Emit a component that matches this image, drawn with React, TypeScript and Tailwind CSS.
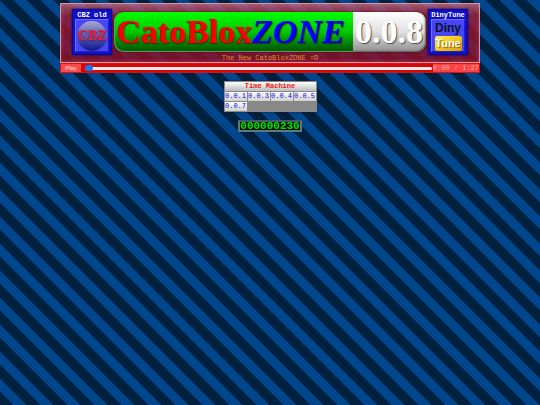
import React, { useState } from 'react';

const VERSIONS = [
  ['0.0.1', '0.0.3', '0.0.4', '0.0.5'],
  ['0.0.7'],
];

interface SiteLinkProps {
  href: string;
  label: string;
  children: React.ReactNode;
}

const SiteLink = ({ href, label, children }: SiteLinkProps) => (
  <a
    href={href}
    className="flex h-[46px] w-10 shrink-0 flex-col items-center border border-[#0808a0] bg-[#1010c4] px-[2px] pt-px pb-[2px] shadow-[0_0_2px_#000060]"
  >
    <span className="text-[7px] leading-[8px] font-bold whitespace-nowrap text-white">{label}</span>
    <span className="flex w-full flex-1 flex-col items-center justify-center border border-t-[#7070ff] border-r-[#2020c0] border-b-[#2020c0] border-l-[#7070ff] bg-[#4646f4]">
      {children}
    </span>
  </a>
);

const Banner = () => (
  <h1 className="flex h-10 min-w-0 flex-1 overflow-hidden rounded-[9px] font-['Liberation_Serif',serif] text-[34px] leading-[40px] font-bold whitespace-nowrap shadow-[0_0_2px_#400010]">
    <span className="flex flex-1 rounded-l-[9px] bg-linear-to-b from-[#00ff00] via-[#00c800] to-[#005000] pl-[2px] text-[#f80000] shadow-[inset_1px_-1px_1px_#60a060] [text-shadow:1px_1px_1px_#303000]">
      CatoBlox
      <em className="text-[#0000ff]">ZONE</em>
    </span>
    <span className="w-[73px] rounded-r-[9px] bg-linear-to-b from-white via-[#e0e0e0] to-[#909090] pl-[2px] text-white shadow-[inset_-1px_-1px_2px_#606060] [text-shadow:1px_1px_1px_#505050]">
      0.0.8
    </span>
  </h1>
);

const Player = () => {
  const [playing, setPlaying] = useState(false);
  const [position, setPosition] = useState(0);

  return (
    <div className="flex h-[10px] items-center border border-[#e01010] bg-[#d80808]">
      <button
        type="button"
        onClick={() => setPlaying(!playing)}
        className="h-2 w-5 shrink-0 bg-[#ff4848] text-center font-['Liberation_Sans',sans-serif] text-[6px] leading-[8px] text-[#ffe0e0]"
      >
        {playing ? 'Pause' : 'Play'}
      </button>
      <input
        type="range"
        aria-label="Seek"
        min={0}
        max={87}
        value={position}
        onChange={(e) => setPosition(Number(e.target.value))}
        className="mr-px ml-1 h-[3px] min-w-0 flex-1 appearance-none rounded-full bg-[#ffe8e8] [&::-webkit-slider-thumb]:h-[6px] [&::-webkit-slider-thumb]:w-2 [&::-webkit-slider-thumb]:appearance-none [&::-webkit-slider-thumb]:rounded-full [&::-webkit-slider-thumb]:bg-[#1478f0]"
      />
      <span className="shrink-0 bg-[#ff4040] text-[7px] leading-[8px] whitespace-nowrap text-[#ffb8b8]">
        0:00 / 1:27
      </span>
    </div>
  );
};

const TimeMachine = () => (
  <table className="border-separate border-spacing-px bg-[#888888] text-[7px] leading-[9px] shadow-[0_0_2px_#202020]">
    <thead>
      <tr>
        <th colSpan={4} className="bg-linear-to-b from-white to-[#bcbcbc] p-0 text-center font-bold text-[#f01414]">
          Time Machine
        </th>
      </tr>
    </thead>
    <tbody>
      {VERSIONS.map((row) => (
        <tr key={row[0]}>
          {row.map((version) => (
            <td key={version} className="w-[22px] bg-linear-to-b from-white to-[#d0d0d0] p-0 text-center">
              <a href={`#${version}`} className="text-[#0000e0]">
                {version}
              </a>
            </td>
          ))}
        </tr>
      ))}
    </tbody>
  </table>
);

const VisitCounter = () => (
  <div className="mt-2 border-2 border-[#607880] border-t-[#405868] bg-[#001400] text-[11px] leading-[8px] font-bold text-[#08d808]">
    000000230
  </div>
);

export default function App() {
  return (
    <div className="min-h-screen bg-[#00468c] bg-[linear-gradient(45deg,#002040_25%,transparent_25%,transparent_50%,#002040_50%,#002040_75%,transparent_75%)] bg-size-[27px_27px] pt-[3px] font-['Liberation_Mono',monospace]">
      <header className="mx-auto w-7/9">
        <div className="border border-[#d898a0] bg-linear-to-b from-[#d06880]/75 via-[#a81830]/75 via-20% to-[#900c24]/80 shadow-[inset_0_0_4px_#d0607080]">
          <div className="flex items-center gap-[2px] px-[11px] pt-[5px]">
            <SiteLink href="#old" label="CBZ old">
              <span className="flex h-[30px] w-[30px] items-center justify-center rounded-full bg-linear-to-b from-[#a8a8d0] via-[#5858b0] to-[#10108c] font-['Liberation_Serif',serif] text-[14px] leading-none font-bold text-[#e8203c] [text-shadow:1px_1px_1px_#5a2a6a]">
                CBZ
              </span>
            </SiteLink>
            <Banner />
            <SiteLink href="#dinytune" label="DinyTune">
              <span className="font-['Liberation_Sans',sans-serif] text-[12px] leading-[15px] font-bold text-[#101028]">
                Diny
              </span>
              <span className="flex h-[15px] w-[27px] items-center justify-center rounded-xs bg-linear-to-br from-[#fff04a] via-[#f2c818] to-[#dca000] font-['Liberation_Sans',sans-serif] text-[11px] leading-none font-bold text-white [text-shadow:1px_1px_1px_#806000]">
                Tune
              </span>
            </SiteLink>
          </div>
          <p className="text-center text-[7px] leading-[7px] text-[#e09020]">The New CatoBloxZONE =D</p>
        </div>
        <Player />
      </header>
      <main className="mt-2 flex flex-col items-center">
        <TimeMachine />
        <VisitCounter />
      </main>
    </div>
  );
}
